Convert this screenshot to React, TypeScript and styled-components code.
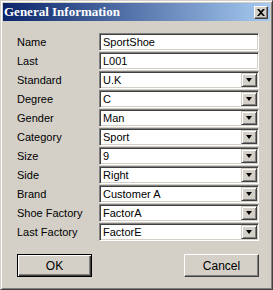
import React from "react";
import styled, { createGlobalStyle } from "styled-components";

const Global = createGlobalStyle`
  html, body { margin: 0; padding: 0; background: #d4d0c8; }
  * { box-sizing: border-box; }
`;

const Window = styled.div`
  width: 273px;
  height: 290px;
  background: #d4d0c8;
  border: 1px solid;
  border-color: #d4d0c8 #404040 #404040 #d4d0c8;
  box-shadow: inset 1px 1px #ffffff, inset -1px -1px #808080;
  padding: 2px;
  display: flex;
  flex-direction: column;
  font-family: "Liberation Sans", Arial, sans-serif;
  font-size: 11px;
  color: #000;
`;

const TitleBar = styled.div`
  height: 18px;
  display: flex;
  align-items: center;
  justify-content: space-between;
  padding: 0 2px 0 1px;
  background: linear-gradient(to right, #0a246a, #a6caf0);
`;

const Title = styled.span`
  font-family: "Liberation Serif", "Times New Roman", serif;
  font-weight: bold;
  font-size: 13px;
  color: #ffffff;
  white-space: nowrap;
`;

const CloseButton = styled.div`
  width: 14px;
  height: 13px;
  background: #d4d0c8;
  border: 1px solid;
  border-color: #ffffff #404040 #404040 #ffffff;
  box-shadow: inset -1px -1px #808080;
  display: flex;
  align-items: center;
  justify-content: center;
`;

const Body = styled.div`
  flex: 1;
  display: flex;
  flex-direction: column;
  padding: 12px 11px 0 14px;
`;

const Form = styled.div`
  display: grid;
  grid-template-columns: 82px 160px;
  grid-auto-rows: 18px;
  row-gap: 1px;
  align-items: center;
`;

const Label = styled.div`
  white-space: nowrap;
  line-height: 13px;
`;

const Field = styled.div`
  height: 18px;
  background: #ffffff;
  border: 1px solid;
  border-color: #808080 #ffffff #ffffff #808080;
  box-shadow: inset 1px 1px #404040, inset -1px -1px #d4d0c8;
  padding: 2px 2px 2px 3px;
  display: flex;
  align-items: center;
  justify-content: space-between;
  line-height: 13px;
  white-space: nowrap;
`;

const DropButton = styled.div`
  width: 16px;
  height: 14px;
  background: #d4d0c8;
  border: 1px solid;
  border-color: #d4d0c8 #404040 #404040 #d4d0c8;
  box-shadow: inset 1px 1px #ffffff, inset -1px -1px #808080;
  display: flex;
  align-items: center;
  justify-content: center;
  margin-right: -1px;
  flex-shrink: 0;
`;

const Arrow = styled.div`
  width: 0;
  height: 0;
  border-left: 3.5px solid transparent;
  border-right: 3.5px solid transparent;
  border-top: 4px solid #000;
`;

const Buttons = styled.div`
  display: flex;
  justify-content: space-between;
  margin-top: 13px;
`;

const Button = styled.div<{ $default?: boolean }>`
  width: 75px;
  height: 23px;
  background: #d4d0c8;
  display: flex;
  align-items: center;
  justify-content: center;
  border: 1px solid;
  border-color: ${(p) => (p.$default ? "#000000" : "#ffffff #404040 #404040 #ffffff")};
  box-shadow: ${(p) =>
    p.$default
      ? "inset 1px 1px #ffffff, inset -1px -1px #404040, inset -2px -2px #808080"
      : "inset -1px -1px #808080"};
  font-size: 12px;
`;

type Row = { label: string; value: string; combo: boolean };

const rows: Row[] = [
  { label: "Name", value: "SportShoe", combo: false },
  { label: "Last", value: "L001", combo: false },
  { label: "Standard", value: "U.K", combo: true },
  { label: "Degree", value: "C", combo: true },
  { label: "Gender", value: "Man", combo: true },
  { label: "Category", value: "Sport", combo: true },
  { label: "Size", value: "9", combo: true },
  { label: "Side", value: "Right", combo: true },
  { label: "Brand", value: "Customer A", combo: true },
  { label: "Shoe Factory", value: "FactorA", combo: true },
  { label: "Last Factory", value: "FactorE", combo: true },
];

export default function App() {
  return (
    <>
      <Global />
      <Window>
        <TitleBar>
          <Title>General Information</Title>
          <CloseButton>
            <svg width="8" height="7" viewBox="0 0 8 7">
              <path d="M0 0h2l2 2 2-2h2L5 3.5 8 7H6L4 5 2 7H0l3-3.5z" fill="#000" />
            </svg>
          </CloseButton>
        </TitleBar>
        <Body>
          <Form>
            {rows.map((r) => (
              <React.Fragment key={r.label}>
                <Label>{r.label}</Label>
                <Field>
                  <span>{r.value}</span>
                  {r.combo && (
                    <DropButton>
                      <Arrow />
                    </DropButton>
                  )}
                </Field>
              </React.Fragment>
            ))}
          </Form>
          <Buttons>
            <Button $default>OK</Button>
            <Button>Cancel</Button>
          </Buttons>
        </Body>
      </Window>
    </>
  );
}
